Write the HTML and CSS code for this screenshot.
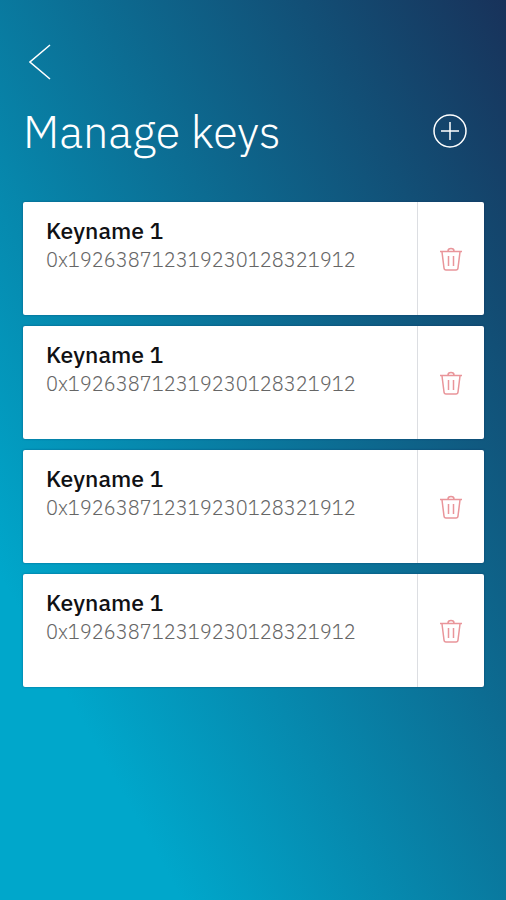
FILE: index.html
```html
<!DOCTYPE html>
<html lang="en">
<head>
<meta charset="utf-8">
<meta name="viewport" content="width=device-width, initial-scale=1">
<title>Manage keys</title>
<link rel="stylesheet" href="styles.css">
</head>
<body>
<svg class="sprite">
  <symbol id="trash" viewBox="0 0 24 26">
    <path d="M1 5.500h22M9 5Q9 2.500 12 2.500T15 5M3 6l2 16Q5.200 24 7 24h10q1.800 0 2-2L21 6M9.500 10v10M14.500 10v10"/>
  </symbol>
</svg>
<main class="screen">
  <nav class="nav">
    <a class="back" href="#" aria-label="Back">
      <svg class="back-icon" viewBox="0 0 22 36"><path d="M21 1L1 18l20 17"/></svg>
    </a>
  </nav>
  <header class="header">
    <h1 class="title">Manage keys</h1>
    <button class="add" type="button" aria-label="Add key">
      <svg class="add-icon" viewBox="0 0 36 36"><circle cx="18" cy="18" r="16"/><path d="M18 9v18M9 18h18"/></svg>
    </button>
  </header>
  <ul class="keys">
    <li class="key">
      <div class="key-info"><h2 class="key-name">Keyname 1</h2><p class="key-value">0x192638712319230128321912</p></div>
      <button class="remove" type="button" aria-label="Delete key"><svg class="trash"><use href="#trash"/></svg></button>
    </li>
    <li class="key">
      <div class="key-info"><h2 class="key-name">Keyname 1</h2><p class="key-value">0x192638712319230128321912</p></div>
      <button class="remove" type="button" aria-label="Delete key"><svg class="trash"><use href="#trash"/></svg></button>
    </li>
    <li class="key">
      <div class="key-info"><h2 class="key-name">Keyname 1</h2><p class="key-value">0x192638712319230128321912</p></div>
      <button class="remove" type="button" aria-label="Delete key"><svg class="trash"><use href="#trash"/></svg></button>
    </li>
    <li class="key">
      <div class="key-info"><h2 class="key-name">Keyname 1</h2><p class="key-value">0x192638712319230128321912</p></div>
      <button class="remove" type="button" aria-label="Delete key"><svg class="trash"><use href="#trash"/></svg></button>
    </li>
  </ul>
</main>
</body>
</html>
```

FILE: styles.css
```css
* {
  box-sizing: border-box;
}

body,
h1,
h2,
p,
ul {
  margin: 0;
  padding: 0;
}

body {
  font-family: "IBM Plex Sans", "Open Sans", sans-serif;
}

button {
  padding: 0;
  border: 0;
  background: none;
  cursor: pointer;
}

svg {
  display: block;
  fill: none;
}

.sprite {
  display: none;
}

.screen {
  min-height: 100vh;
  padding: 44px 22px 24px 23px;
  background: linear-gradient(to top right, #00a7cb 18%, #18325a 100%);
}

.nav {
  display: flex;
  padding-left: 6px;
}

.back-icon {
  width: 22px;
  height: 36px;
  stroke: #fff;
  stroke-width: 1.5;
}

.header {
  display: flex;
  align-items: center;
  justify-content: space-between;
  padding: 20px 16px 40px 0;
}

.title {
  color: #fff;
  font-size: 45px;
  font-weight: 300;
  line-height: 62px;
}

.add-icon {
  width: 36px;
  height: 36px;
  stroke: #fff;
  stroke-width: 1.5;
}

.keys {
  display: grid;
  gap: 11px;
  list-style: none;
}

.key {
  display: flex;
  min-height: 113px;
  border-radius: 2px;
  background: #fff;
  box-shadow: 0 0 2px rgba(10, 30, 80, 0.5);
}

.key-info {
  flex: 1;
  padding: 14px 23px;
}

.key-name {
  color: #101114;
  font-size: 23px;
  font-weight: 500;
  line-height: 29px;
}

.key-value {
  color: #666;
  font-size: 20px;
  font-weight: 300;
  line-height: 29px;
}

.remove {
  display: flex;
  align-items: center;
  justify-content: center;
  width: 67px;
  border-left: 1px solid #dcdee2;
}

.trash {
  width: 24px;
  height: 26px;
  stroke: #e9959a;
  stroke-width: 1.5;
}
```
